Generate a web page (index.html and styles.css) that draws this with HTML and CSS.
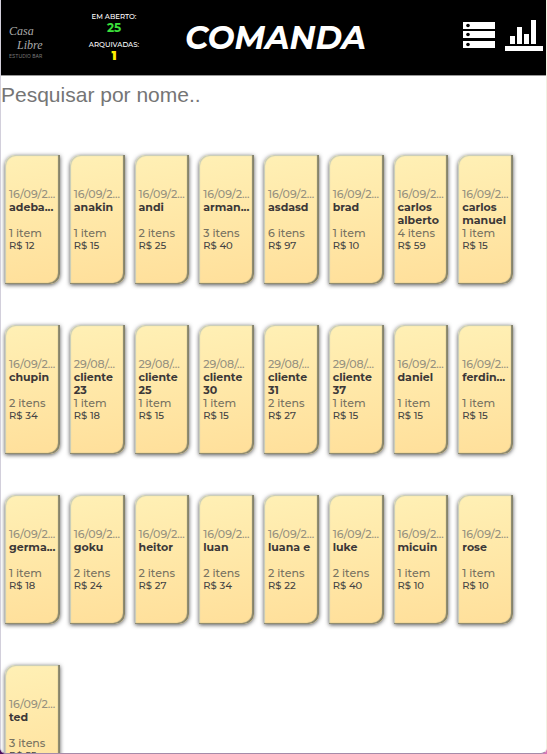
FILE: index.html
```
<!DOCTYPE html>
<html lang="pt-BR">
<head>
<meta charset="utf-8">
<meta name="viewport" content="width=device-width, initial-scale=1">
<title>Comanda</title>
<link rel="stylesheet" href="styles.css">
</head>
<body>
<div class="app">
  <header class="header">
    <div class="logo"><span class="logo-casa">Casa</span><span class="logo-libre">Libre</span><span class="logo-sub">ESTUDIO BAR</span></div>
    <div class="counts">
      <span class="count-label">EM ABERTO:</span>
      <strong class="count open">25</strong>
      <span class="count-label archived-label">ARQUIVADAS:</span>
      <strong class="count archived">1</strong>
    </div>
    <h1 class="title">COMANDA</h1>
    <nav class="actions">
      <button class="icon-button" type="button" aria-label="Lista">
        <svg width="32" height="28" viewBox="0 0 32 28"><path fill="#fff" d="M0 1h32v7H0zM0 10h32v7H0zM0 20h32v7H0z"/><g fill="#000"><circle cx="5" cy="4.5" r="1.8"/><circle cx="5" cy="13.5" r="1.8"/><circle cx="5" cy="23.5" r="1.8"/></g></svg>
      </button>
      <button class="icon-button" type="button" aria-label="Estatísticas">
        <svg width="38" height="32" viewBox="0 0 38 32"><path fill="#fff" d="M5 17h5v8H5zM12 8h5v17h-5zM19 15h5v10h-5zM26 1h5v24h-5zM0 27h38v5H0z"/></svg>
      </button>
    </nav>
  </header>
  <main>
    <input class="search" type="text" placeholder="Pesquisar por nome.." aria-label="Pesquisar por nome">
    <div class="cards" id="cards"></div>
  </main>
</div>
<script src="cards.js"></script>
</body>
</html>
```
FILE: styles.css
```
* {
  box-sizing: border-box;
}

html {
  background: linear-gradient(90deg, #4a0d5c, #d977b8);
}

body {
  margin: 0;
  font-family: Montserrat, Inter, sans-serif;
}

.app {
  height: 100vh;
  overflow: hidden;
  background: #fff;
  border: solid #d2cfdb;
  border-width: 0 1px 1px;
  border-right-color: #f3f1e2;
  border-bottom-color: #a58ba9;
  border-radius: 0 0 6px 6px;
}

.header {
  display: grid;
  grid-template-columns: 50px 126px 1fr auto;
  align-items: center;
  height: 76px;
  padding: 0 4px 0 0;
  background: #000;
  border-bottom: 1px solid #999;
  margin: 0 -1px;
  color: #fff;
}

.logo {
  display: flex;
  flex-direction: column;
  padding: 8px 0 0 9px;
  color: #aaa;
  font: italic 12px/14px "Liberation Serif", serif;
}

.logo-libre {
  padding-left: 8px;
}

.logo-sub {
  color: #777;
  font: 5px/8px Inter, sans-serif;
  white-space: nowrap;
}

.counts {
  display: flex;
  flex-direction: column;
  align-items: center;
  justify-self: center;
  padding-left: 2px;
}

.count-label {
  font-size: 7px;
  font-weight: 500;
  line-height: 8px;
}

.archived-label {
  margin-top: 7px;
}

.count {
  font-size: 12px;
  line-height: 13px;
}

.open {
  color: #3be03b;
}

.archived {
  color: #ffee00;
  font-weight: 900;
}

.title {
  margin: 0;
  padding-left: 9px;
  font-size: 32px;
  font-style: italic;
  font-weight: 700;
  line-height: 36px;
}

.actions {
  display: flex;
  gap: 10px;
  align-items: center;
  padding-bottom: 5px;
}

.icon-button {
  display: block;
  padding: 0;
  border: 0;
  background: none;
}

.icon-button svg {
  display: block;
}

.search {
  display: block;
  width: 100%;
  height: 38px;
  padding: 0;
  border: 0;
  outline: 0;
  background: none;
  font: 21px "Liberation Sans", sans-serif;
}

.search::placeholder {
  color: #757575;
  opacity: 1;
}

.cards {
  display: grid;
  grid-template-columns: repeat(8, minmax(0, 1fr));
  gap: 41px 10px;
  padding: 41px 33px 0 4px;
}

.card {
  height: 129px;
  padding: 33px 0 0 4px;
  overflow: hidden;
  background: linear-gradient(170deg, #fff0b5, #ffdf9a);
  border-radius: 10px 0;
  box-shadow: inset -2px -1px 1px #85836b, inset 1px 1px 1px #c6cbb8, 0 1px 4px #555;
  font-size: 11px;
  font-weight: 500;
  line-height: 13px;
  color: #444;
}

.card p,
.card h2 {
  margin: 0;
}

.card .date {
  color: #96917f;
  white-space: nowrap;
}

.card .name {
  height: 26px;
  font-size: 11px;
  font-weight: 700;
  color: #3c3838;
}

.card .items {
  color: #777261;
}

.card .price {
  font-size: 10px;
  line-height: 11px;
}
```
FILE: cards.js
```
const orders = [
  ["16/09/2...", "adeba...", 1, 12],
  ["16/09/2...", "anakin", 1, 15],
  ["16/09/2...", "andi", 2, 25],
  ["16/09/2...", "arman...", 3, 40],
  ["16/09/2...", "asdasd", 6, 97],
  ["16/09/2...", "brad", 1, 10],
  ["16/09/2...", "carlos alberto", 4, 59],
  ["16/09/2...", "carlos manuel", 1, 15],
  ["16/09/2...", "chupin", 2, 34],
  ["29/08/...", "cliente 23", 1, 18],
  ["29/08/...", "cliente 25", 1, 15],
  ["29/08/...", "cliente 30", 1, 15],
  ["29/08/...", "cliente 31", 2, 27],
  ["29/08/...", "cliente 37", 1, 15],
  ["16/09/2...", "daniel", 1, 15],
  ["16/09/2...", "ferdin...", 1, 15],
  ["16/09/2...", "germa...", 1, 18],
  ["16/09/2...", "goku", 2, 24],
  ["16/09/2...", "heitor", 2, 27],
  ["16/09/2...", "luan", 2, 34],
  ["16/09/2...", "luana e", 2, 22],
  ["16/09/2...", "luke", 2, 40],
  ["16/09/2...", "micuin", 1, 10],
  ["16/09/2...", "rose", 1, 10],
  ["16/09/2...", "ted", 3, 55]
];

document.getElementById("cards").innerHTML = orders.map(([date, name, items, price]) => `
  <article class="card">
    <p class="date">${date}</p>
    <h2 class="name">${name}</h2>
    <p class="items">${items} ${items === 1 ? "item" : "itens"}</p>
    <p class="price">R$ ${price}</p>
  </article>`).join("");
```
